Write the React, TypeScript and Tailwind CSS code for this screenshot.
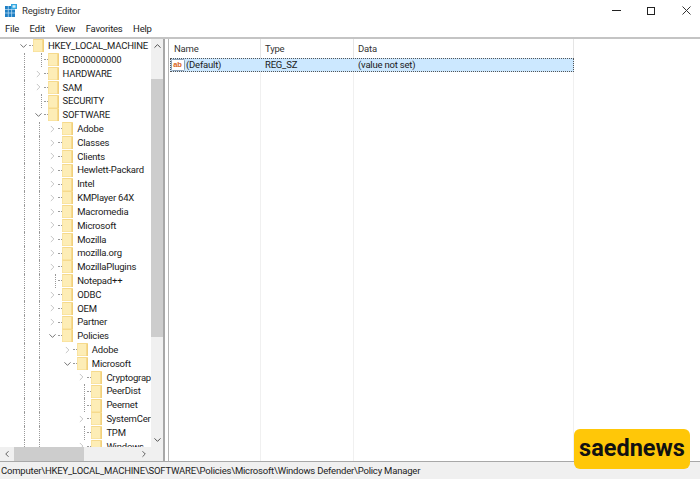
import { ChevronRight, ChevronDown, ChevronUp, ChevronLeft } from 'lucide-react'

type Node = { name: string; depth: number; arrow: 'open' | 'closed' | 'none' }

const nodes: Node[] = [
  { name: "HKEY_LOCAL_MACHINE", depth: 0, arrow: "open" },
  { name: "BCD00000000", depth: 1, arrow: "none" },
  { name: "HARDWARE", depth: 1, arrow: "closed" },
  { name: "SAM", depth: 1, arrow: "closed" },
  { name: "SECURITY", depth: 1, arrow: "none" },
  { name: "SOFTWARE", depth: 1, arrow: "open" },
  { name: "Adobe", depth: 2, arrow: "closed" },
  { name: "Classes", depth: 2, arrow: "closed" },
  { name: "Clients", depth: 2, arrow: "closed" },
  { name: "Hewlett-Packard", depth: 2, arrow: "closed" },
  { name: "Intel", depth: 2, arrow: "closed" },
  { name: "KMPlayer 64X", depth: 2, arrow: "closed" },
  { name: "Macromedia", depth: 2, arrow: "closed" },
  { name: "Microsoft", depth: 2, arrow: "closed" },
  { name: "Mozilla", depth: 2, arrow: "closed" },
  { name: "mozilla.org", depth: 2, arrow: "closed" },
  { name: "MozillaPlugins", depth: 2, arrow: "closed" },
  { name: "Notepad++", depth: 2, arrow: "none" },
  { name: "ODBC", depth: 2, arrow: "closed" },
  { name: "OEM", depth: 2, arrow: "closed" },
  { name: "Partner", depth: 2, arrow: "closed" },
  { name: "Policies", depth: 2, arrow: "open" },
  { name: "Adobe", depth: 3, arrow: "closed" },
  { name: "Microsoft", depth: 3, arrow: "open" },
  { name: "Cryptography", depth: 4, arrow: "closed" },
  { name: "PeerDist", depth: 4, arrow: "none" },
  { name: "Peernet", depth: 4, arrow: "none" },
  { name: "SystemCertificates", depth: 4, arrow: "closed" },
  { name: "TPM", depth: 4, arrow: "none" },
  { name: "Windows", depth: 4, arrow: "closed" },
]

function Folder() {
  return (
    <svg width="11" height="13" viewBox="0 0 11 13" className="shrink-0">
      <rect x="0" y="0" width="11" height="13" rx="0.5" fill="#f6da8c" />
      <rect x="0.5" y="1" width="9" height="11.5" fill="#fdedb6" />
      <rect x="9.5" y="1" width="1.5" height="12" fill="#f1d07c" />
    </svg>
  )
}

function TreeRow({ node }: { node: Node }) {
  return (
    <div className="flex items-center h-[13.82px] pl-[18px]">
      {/* guide lines for the parent levels */}
      {Array.from({ length: node.depth }).map((_, i) => (
        <div key={i} className="w-[14.6px] h-full shrink-0">
          {i < 2 && <div className="ml-[6px] h-full border-l border-dotted border-[#9a9a9a]" />}
        </div>
      ))}
      <div className="w-[11px] shrink-0 flex justify-center">
        {node.arrow === "open" && <ChevronDown size={12} strokeWidth={1.6} className="text-[#404040]" />}
        {node.arrow === "closed" && <ChevronRight size={12} strokeWidth={1.4} className="text-[#a6a6a6]" />}
        {node.arrow === "none" && <div className="ml-[6px] h-[14px] border-l border-dotted border-[#9a9a9a]" />}
      </div>
      <div className="w-[4px] shrink-0 border-t border-dotted border-[#9a9a9a]" />
      <Folder />
      <span className="ml-[4px] whitespace-nowrap text-[#1a1a1a]">{node.name}</span>
    </div>
  )
}

function AppIcon() {
  return (
    <svg width="12" height="13" viewBox="0 0 12 13">
      <rect x="0" y="2" width="10" height="11" fill="#1f7fc4" />
      <path d="M0 5.5h10M0 9h10M3.3 2v11M6.6 2v11" stroke="#bfe0f5" strokeWidth="0.7" />
      <rect x="6" y="0" width="6" height="5" fill="#35a7e0" />
      <rect x="7.5" y="1.2" width="3" height="2.5" fill="#d7effb" />
    </svg>
  )
}

function StringIcon() {
  return (
    <svg width="14" height="12" viewBox="0 0 14 12">
      <rect x="0.5" y="0.5" width="13" height="11" rx="1" fill="#fff" stroke="#8fa3b8" />
      <text x="2.2" y="7.5" fontSize="7.5" fontWeight="700" fill="#d9651c" fontFamily="'Liberation Sans', sans-serif">ab</text>
    </svg>
  )
}

export default function App() {
  return (
    <div className="relative w-[700px] h-[479px] overflow-hidden bg-white flex flex-col font-['Roboto','Liberation_Sans',sans-serif] text-[9.5px] tracking-[-0.2px] leading-none text-[#1a1a1a]">
      {/* Title bar */}
      <div className="h-[21px] shrink-0 flex items-center pl-[5px] pr-[9px]">
        <AppIcon />
        <span className="ml-[5px] text-[#333]">Registry Editor</span>
        <div className="ml-auto flex items-center">
          <div className="w-[9px] border-t border-[#222] mr-[26px]" />
          <div className="w-[8px] h-[8px] border border-[#222] mr-[27px]" />
          <svg width="9" height="9" viewBox="0 0 9 9">
            <path d="M0.5 0.5l8 8M8.5 0.5l-8 8" stroke="#333" strokeWidth="1" />
          </svg>
        </div>
      </div>

      {/* Menu */}
      <div className="h-[16px] shrink-0 flex items-center gap-[10.5px] pl-[5px]">
        {["File", "Edit", "View", "Favorites", "Help"].map((m) => (
          <span key={m}>{m}</span>
        ))}
      </div>

      {/* Panes */}
      <div className="flex-1 min-h-0 flex border-t-2 border-[#c4c4c4]">
        {/* Tree */}
        <div className="w-[165px] shrink-0 flex flex-col border-r-2 border-[#a8a8a8] min-h-0">
          <div className="flex-1 min-h-0 flex">
            <div className="w-[151px] overflow-hidden">
              {nodes.map((n, i) => (
                <TreeRow key={i} node={n} />
              ))}
            </div>
            <div className="w-[12px] shrink-0 bg-[#f0f0f0] flex flex-col items-center">
              <ChevronUp size={11} strokeWidth={2} className="h-[14px] text-[#444]" />
              <div className="h-[26px]" />
              <div className="w-full h-[258px] bg-[#cdcdcd]" />
              <div className="flex-1" />
              <ChevronDown size={11} strokeWidth={2} className="h-[14px] text-[#444]" />
            </div>
          </div>
          <div className="h-[14px] shrink-0 bg-[#f0f0f0] flex items-center">
            <div className="w-[14px] flex justify-center">
              <ChevronLeft size={10} strokeWidth={2} className="text-[#444]" />
            </div>
            <div className="w-[70px] h-full bg-[#cdcdcd]" />
            <div className="w-[55px]" />
            <ChevronRight size={10} strokeWidth={2} className="text-[#444]" />
          </div>
        </div>

        {/* Values */}
        <div className="flex-1 ml-[3px] border-l border-[#b5b5b5] flex flex-col min-w-0">
          <div className="h-[19px] shrink-0 flex items-center text-[#333]">
            <div className="w-[92px] h-full pl-[5px] flex items-center border-r border-[#e5e5e5]">Name</div>
            <div className="w-[93px] h-full pl-[4px] flex items-center border-r border-[#e5e5e5]">Type</div>
            <div className="w-[220px] h-full pl-[4px] flex items-center border-r border-[#e5e5e5]">Data</div>
          </div>
          <div className="h-[14px] shrink-0 ml-[1px] w-[404px] flex items-center bg-[#cce8ff] border border-dotted border-[#555]">
            <div className="w-[90px] flex items-center">
              <StringIcon />
              <span className="ml-[1px]">(Default)</span>
            </div>
            <div className="w-[93px] pl-[4px]">REG_SZ</div>
            <div className="pl-[4px]">(value not set)</div>
          </div>
          <div className="flex-1 flex">
            <div className="w-[92px] border-r border-[#f0f0f0]" />
            <div className="w-[93px] border-r border-[#f0f0f0]" />
            <div className="w-[220px] border-r border-[#f0f0f0]" />
          </div>
        </div>
      </div>

      {/* Status bar */}
      <div className="h-[18px] shrink-0 flex items-center pl-[1px] bg-[#f0f0f0] border-t border-[#a8a8a8] text-[#222]">
        Computer\HKEY_LOCAL_MACHINE\SOFTWARE\Policies\Microsoft\Windows Defender\Policy Manager
      </div>

      {/* Watermark */}
      <div className="absolute left-[574px] top-[429px] w-[116px] h-[40px] rounded-[6px] bg-[#ffc708] flex items-center justify-center font-['Roboto',sans-serif] font-bold text-[23.5px] tracking-normal text-[#111]">
        saednews
      </div>
    </div>
  )
}
